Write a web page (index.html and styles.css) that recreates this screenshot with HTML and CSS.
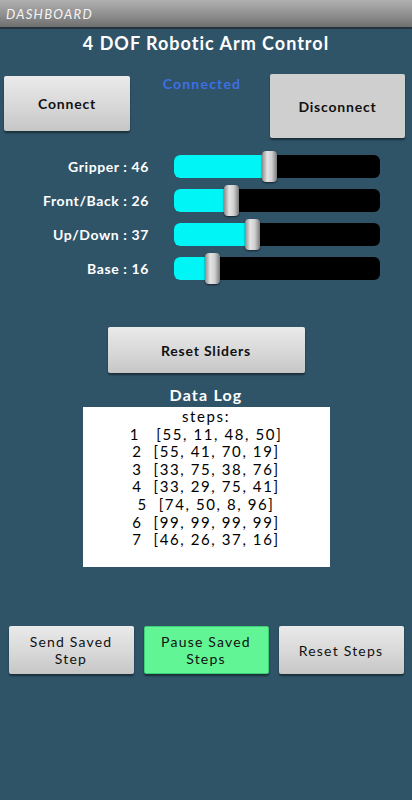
FILE: index.html
```html
<!DOCTYPE html>
<html>
<head>
<meta charset="utf-8">
<link rel="stylesheet" href="styles.css">
</head>
<body>
<div class="titlebar">DASHBOARD</div>
<div class="screen">
  <h1 class="heading">4 DOF Robotic Arm Control</h1>
  <div class="conn-row">
    <button class="btn btn-connect">Connect</button>
    <div class="status">Connected</div>
    <button class="btn btn-disconnect">Disconnect</button>
  </div>
  <div class="sliders">
    <div class="label">Gripper : 46</div>
    <div class="track"><div class="fill" style="width:95px"></div><div class="thumb" style="left:88px"></div></div>
    <div class="label">Front/Back : 26</div>
    <div class="track"><div class="fill" style="width:56px"></div><div class="thumb" style="left:50px"></div></div>
    <div class="label">Up/Down : 37</div>
    <div class="track"><div class="fill" style="width:77px"></div><div class="thumb" style="left:71px"></div></div>
    <div class="label">Base : 16</div>
    <div class="track"><div class="fill" style="width:37px"></div><div class="thumb" style="left:31px"></div></div>
  </div>
  <button class="btn btn-reset">Reset Sliders</button>
  <div class="log-title">Data Log</div>
  <div class="log">
    <div>steps:</div>
    <div>1 &nbsp; [55, 11, 48, 50]</div>
    <div>2 &nbsp;[55, 41, 70, 19]</div>
    <div>3 &nbsp;[33, 75, 38, 76]</div>
    <div>4 &nbsp;[33, 29, 75, 41]</div>
    <div>5 &nbsp;[74, 50, 8, 96]</div>
    <div>6 &nbsp;[99, 99, 99, 99]</div>
    <div>7 &nbsp;[46, 26, 37, 16]</div>
  </div>
  <div class="bottom-row">
    <button class="btn btn-bottom">Send Saved<br>Step</button>
    <button class="btn btn-bottom btn-green">Pause Saved<br>Steps</button>
    <button class="btn btn-bottom">Reset Steps</button>
  </div>
</div>
</body>
</html>
```
FILE: styles.css
```css
* { box-sizing: border-box; }
html, body {
  margin: 0;
  padding: 0;
}
body {
  width: 412px;
  height: 800px;
  background: #2f5468;
  font-family: Lato, "Liberation Sans", sans-serif;
  overflow: hidden;
}
.titlebar {
  height: 29px;
  background: linear-gradient(#b0b0b0, #8c8c8c 60%, #6e6e6e);
  border-bottom: 2px solid #27333a;
  color: #f4f4f4;
  font-size: 13px;
  font-style: italic;
  letter-spacing: 1.3px;
  padding: 6px 0 0 6px;
  line-height: 16px;
}
.screen {
  display: flex;
  flex-direction: column;
  align-items: center;
}
.heading {
  margin: 3px 0 0 0;
  font-size: 18px;
  line-height: 22px;
  font-weight: 700;
  color: #ffffff;
  letter-spacing: 1px;
}
.conn-row {
  align-self: stretch;
  display: flex;
  align-items: flex-start;
  margin-top: 20px;
  padding: 0 7px 0 4px;
}
.btn {
  font-family: Lato, "Liberation Sans", sans-serif;
  color: #111;
  font-size: 14px;
  font-weight: 700;
  letter-spacing: 0.8px;
  border: none;
  border-radius: 2px;
  background: linear-gradient(#eaeaea, #d6d6d6 60%, #c6c6c6);
  box-shadow: 0 2px 2px rgba(0,0,0,0.45);
  padding: 0;
  line-height: 17px;
}
.btn-connect {
  width: 126px;
  height: 55px;
  margin-top: 2px;
}
.status {
  flex: 1;
  text-align: center;
  color: #3f6fe6;
  font-size: 14px;
  font-weight: 700;
  letter-spacing: 1.2px;
  padding: 2px 0 0 4px;
  line-height: 16px;
}
.btn-disconnect {
  width: 135px;
  height: 64px;
  background: #cfcfcf;
}
.sliders {
  align-self: stretch;
  display: grid;
  grid-template-columns: 149px 206px;
  column-gap: 25px;
  row-gap: 11px;
  margin-top: 17px;
  align-items: center;
}
.label {
  text-align: right;
  color: #fff;
  font-size: 14px;
  font-weight: 700;
  letter-spacing: 0.6px;
  line-height: 23px;
}
.track {
  position: relative;
  height: 23px;
  background: #000;
  border-radius: 6px;
}
.fill {
  height: 23px;
  background: #00f6f6;
  border-radius: 6px 0 0 6px;
}
.thumb {
  position: absolute;
  top: -4px;
  width: 15px;
  height: 31px;
  border-radius: 4px;
  background: linear-gradient(90deg, #8c8c8c, #e4e4e4 35%, #cfcfcf 65%, #7a7a7a);
  box-shadow: 0 1px 2px rgba(0,0,0,0.6);
}
.btn-reset {
  width: 197px;
  height: 46px;
  margin-top: 47px;
}
.log-title {
  margin-top: 12px;
  color: #fff;
  font-size: 16px;
  font-weight: 700;
  letter-spacing: 1.2px;
  line-height: 20px;
}
.log {
  width: 247px;
  height: 160px;
  margin-top: 2px;
  background: #fff;
  color: #000;
  text-align: center;
  font-size: 15px;
  letter-spacing: 1.6px;
  line-height: 17.6px;
  padding-top: 1px;
}
.bottom-row {
  display: flex;
  gap: 10px;
  margin-top: 59px;
}
.btn-bottom {
  width: 125px;
  height: 48px;
  font-size: 14px;
  font-weight: 400;
  letter-spacing: 1.2px;
}
.btn-green {
  background: #62f595;
  border: 1px solid #3fcf78;
}
```
